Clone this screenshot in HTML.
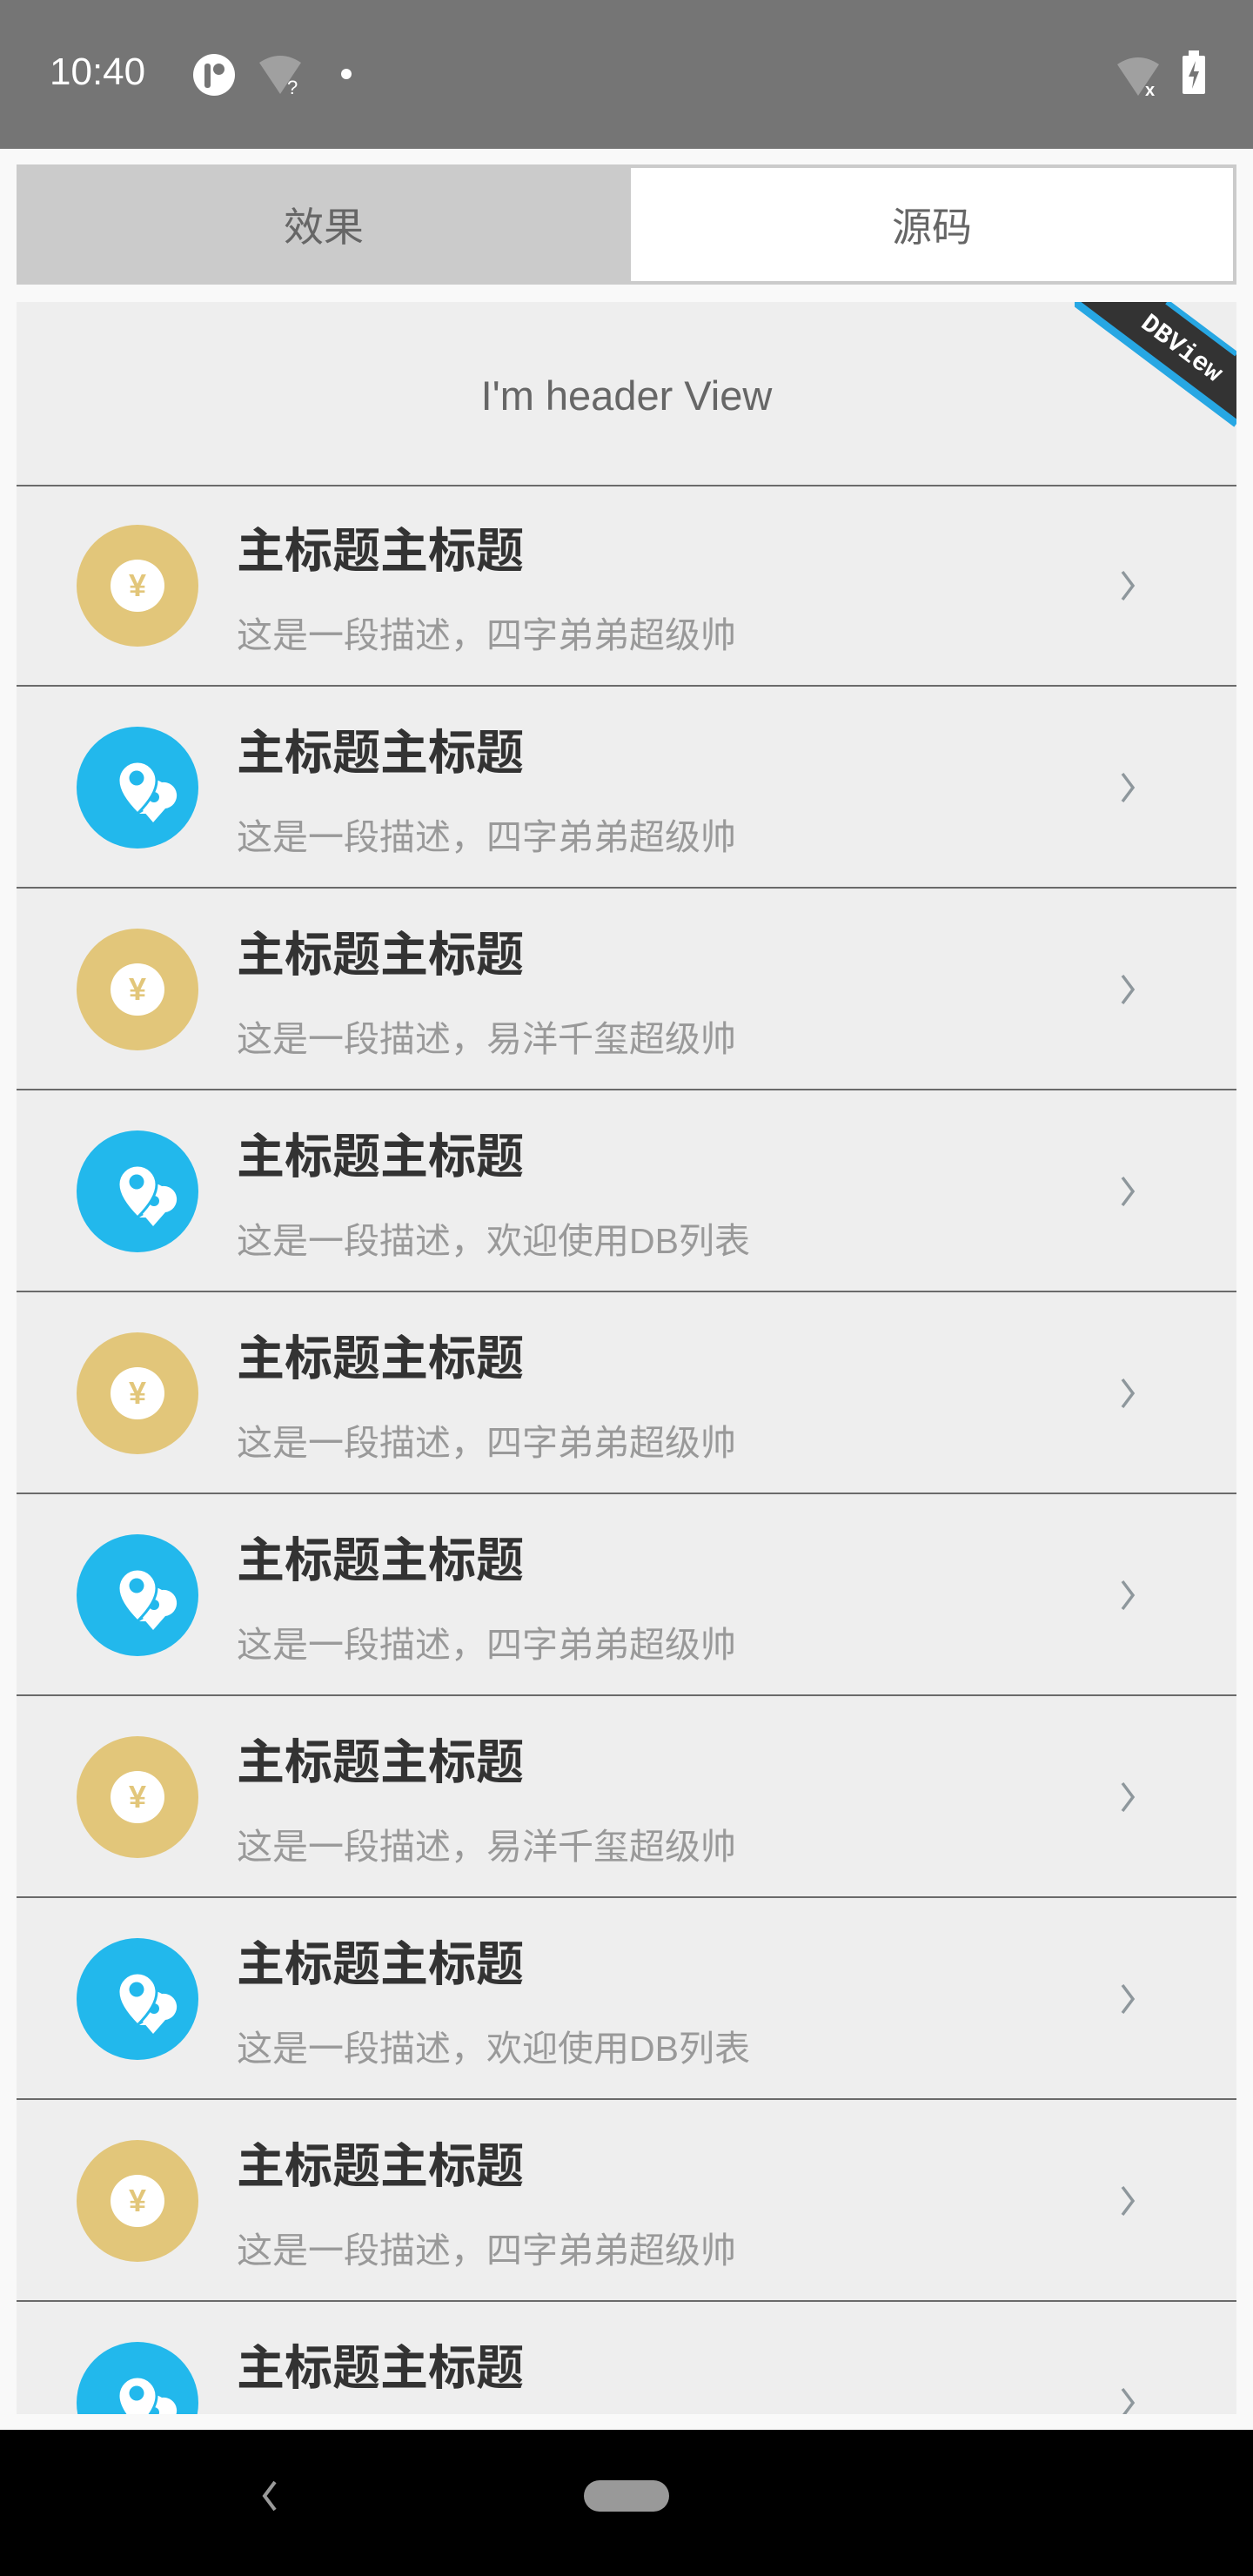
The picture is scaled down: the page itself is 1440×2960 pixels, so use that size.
<!DOCTYPE html>
<html><head><meta charset="utf-8"><style>
*{margin:0;padding:0;box-sizing:border-box}
body{width:1440px;height:2960px;background:#f9f9f9;position:relative;overflow:hidden;font-family:"Liberation Sans","Noto Sans CJK SC",sans-serif}
.abs{position:absolute}
.sb{left:0;top:0;width:1440px;height:171px;background:#757575}
.tabL{left:19px;top:189px;width:706px;height:138px;background:#cbcbcb;font-size:46px;color:#666;display:flex;align-items:center;justify-content:center}
.tabR{left:725px;top:189px;width:696px;height:138px;background:#fff;border:4px solid #cbcbcb;border-left:none;font-size:46px;color:#666;display:flex;align-items:center;justify-content:center}
.list{left:19px;top:347px;width:1402px;height:2427px;background:#eee;overflow:hidden}
.hdr{position:absolute;left:0;top:0;width:1402px;height:212px;border-bottom:2px solid #6a6a6a;display:flex;align-items:center;justify-content:center;font-size:47px;color:#666;padding-top:4px}
.row{position:absolute;left:0;width:1402px;height:232px;border-bottom:2px solid #6a6a6a}
.ic{position:absolute;left:69px;top:46px;width:140px;height:140px;border-radius:50%}
.t{position:absolute;left:253px;top:43px;font-size:55px;font-weight:bold;color:#333;line-height:66px}
.s{position:absolute;left:253px;top:147px;font-size:41px;color:#999;line-height:52px}
.ch{position:absolute;left:1268px;top:98px}
.nav{left:0;top:2792px;width:1440px;height:168px;background:#000}
</style></head><body>
<div class="abs sb">
<div class="abs" style="left:57px;top:58px;font-size:44px;color:#fff">10:40</div>
<div class="abs" style="left:222px;top:62px;width:48px;height:48px;border-radius:50%;background:#fff"><div class="abs" style="left:13px;top:11px;width:7px;height:28px;background:#757575;border-radius:3px"></div><div class="abs" style="left:23px;top:11px;width:13px;height:13px;background:#757575;border-radius:50%"></div></div>
<svg class="abs" style="left:296px;top:62px" width="56" height="48"><path d="M2 10 Q26 -6 50 10 L26 46 Z" fill="#a0a0a0"/><text x="34" y="46" font-size="22" fill="#fff" font-family="Liberation Sans">?</text></svg>
<div class="abs" style="left:392px;top:79px;width:12px;height:12px;border-radius:50%;background:#fff"></div>
<svg class="abs" style="left:1282px;top:62px" width="56" height="50"><path d="M2 12 Q26 -4 50 12 L26 48 Z" fill="#a0a0a0"/><text x="34" y="48" font-size="20" font-weight="bold" fill="#fff" font-family="Liberation Sans">x</text></svg>
<div class="abs" style="left:1359px;top:64px;width:26px;height:44px;background:#fff;border-radius:2px"></div>
<div class="abs" style="left:1366px;top:58px;width:12px;height:8px;background:#fff"></div>
<svg class="abs" style="left:1359px;top:64px" width="26" height="44"><path d="M15 6 L7 24 L13 24 L11 38 L19 18 L13 18 Z" fill="#757575"/></svg>
</div>
<div class="abs tabL">效果</div>
<div class="abs tabR">源码</div>
<div class="abs list">
<div class="hdr">I'm header View</div>
<svg class="abs" style="left:1216px;top:0" width="186" height="145"><polygon points="0,0 106,0 186,60 186,140" fill="#333"/><line x1="0" y1="0" x2="186" y2="140" stroke="#27a7e3" stroke-width="9"/><line x1="106" y1="0" x2="186" y2="60" stroke="#27a7e3" stroke-width="6"/><text x="0" y="0" text-anchor="middle" transform="translate(118,60) rotate(37)" font-family="Liberation Mono" font-weight="bold" font-size="30" fill="#fff">DBView</text></svg>
</div>
<div class="abs" id="rows" style="left:19px;top:559px;width:1402px;height:2215px;overflow:hidden"></div>
<div class="abs nav">
<svg class="abs" style="left:298px;top:58px" width="24" height="36"><path d="M18 2 L6 18 L18 34" stroke="#999" stroke-width="4" fill="none"/></svg>
<div class="abs" style="left:671px;top:58px;width:98px;height:36px;border-radius:18px;background:#999"></div>
</div>
<script>
var subs=["这是一段描述，四字弟弟超级帅","这是一段描述，四字弟弟超级帅","这是一段描述，易洋千玺超级帅","这是一段描述，欢迎使用DB列表","这是一段描述，四字弟弟超级帅","这是一段描述，四字弟弟超级帅","这是一段描述，易洋千玺超级帅","这是一段描述，欢迎使用DB列表","这是一段描述，四字弟弟超级帅","这是一段描述，四字弟弟超级帅"];
var gold='<div class="ic" style="background:#e2c67a"><div style="position:absolute;left:39px;top:40px;width:62px;height:60px;border-radius:50%;background:#fff;color:#e2c67a;font-size:36px;font-weight:bold;text-align:center;line-height:60px">¥</div></div>';
var blue='<div class="ic" style="background:#22b8ec"><svg style="position:absolute;left:0;top:0" width="140" height="140"><path d="M98 64 a14 14 0 0 1 4 30 L88 110 L76 96 a14 14 0 0 1 22 -32 Z" fill="#fff"/><circle cx="89" cy="81" r="6" fill="#22b8ec"/><path d="M70 40 a22 22 0 0 1 22 22 c0 14 -12 28 -22 38 c-10 -10 -22 -24 -22 -38 a22 22 0 0 1 22 -22 Z" fill="#fff" stroke="#22b8ec" stroke-width="3"/><circle cx="69" cy="59" r="8.5" fill="#22b8ec"/><path d="M72 100 L94 100 L85 92 Z" fill="#fff"/></svg></div>';
var h='';
for(var i=0;i<10;i++){h+='<div class="row" style="top:'+(i*232-2)+'px">'+(i%2?blue:gold)+'<div class="t">主标题主标题</div><div class="s">'+subs[i]+'</div><svg class="ch" width="20" height="36"><path d="M3 2 L15 18 L3 34" stroke="#8e979c" stroke-width="3.5" fill="none"/></svg></div>';}
document.getElementById('rows').innerHTML=h;
</script>
</body></html>
